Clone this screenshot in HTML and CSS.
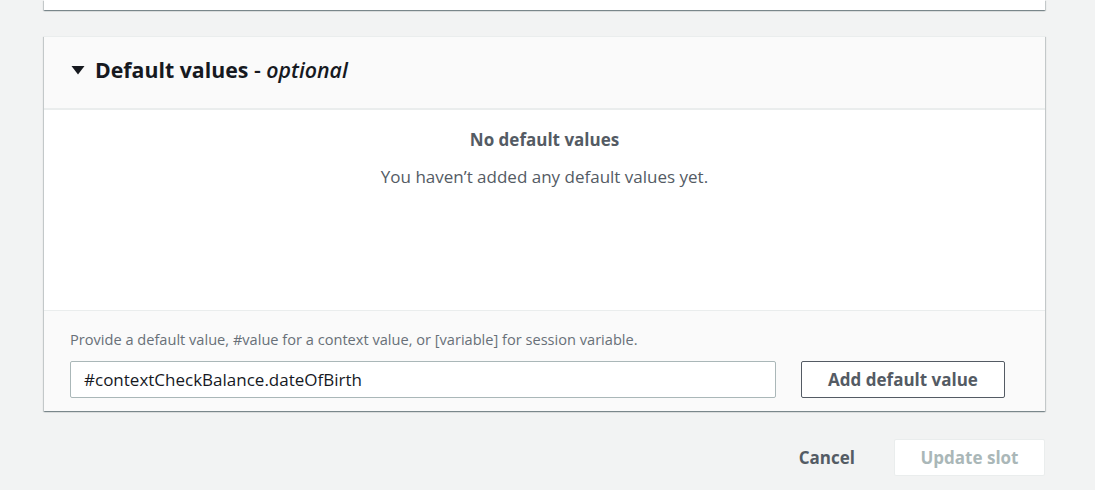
FILE: index.html
```html
<!DOCTYPE html>
<html>
<head>
<meta charset="utf-8">
<link rel="stylesheet" href="styles.css">
</head>
<body>
<div class="page">
  <div class="card top-card"></div>
  <div class="card main-card">
    <div class="card-header">
      <svg class="caret" width="14" height="10" viewBox="0 0 14 10"><polygon points="0.5,1 13.5,1 7,9.5" fill="#16191f"/></svg>
      <h2 class="title">Default values <span class="opt">- <em>optional</em></span></h2>
    </div>
    <div class="card-body">
      <div class="empty-title">No default values</div>
      <div class="empty-text">You haven’t added any default values yet.</div>
    </div>
    <div class="card-footer">
      <div class="hint">Provide a default value, #value for a context value, or [variable] for session variable.</div>
      <div class="input-row">
        <div class="input">#contextCheckBalance.dateOfBirth</div>
        <button class="btn btn-normal">Add default value</button>
      </div>
    </div>
  </div>
  <div class="actions">
    <button class="btn-link">Cancel</button>
    <button class="btn btn-disabled">Update slot</button>
  </div>
</div>
</body>
</html>
```
FILE: styles.css
```css
html, body {
  margin: 0;
  padding: 0;
  background: #f2f3f3;
  font-family: "Open Sans", "Noto Sans", sans-serif;
  color: #16191f;
}
.page {
  width: 1001px;
  margin-left: 44px;
}
.card {
  background: #fff;
  box-shadow: 0 1px 1px 0 rgba(0,28,36,.3), 1px 1px 1px 0 rgba(0,28,36,.15), -1px 1px 1px 0 rgba(0,28,36,.15);
}
.top-card {
  height: 10px;
}
.main-card {
  margin-top: 26px;
  border-top: 1px solid #eaeded;
}
.card-header {
  background: #fafafa;
  border-bottom: 2px solid #eaeded;
  display: flex;
  align-items: center;
  padding-left: 27px;
  padding-bottom: 5px;
  gap: 10px;
  box-sizing: border-box;
  height: 73px;
}
.caret { display: block; }
.title {
  margin: 0;
  font-size: 21.3px;
  font-weight: 700;
  line-height: 26px;
}
.title .opt { font-weight: 600; }
.card-body {
  height: 200px;
  text-align: center;
  color: #545b64;
  padding-top: 18px;
  box-sizing: border-box;
}
.empty-title {
  font-weight: 700;
  font-size: 17px;
  line-height: 24px;
}
.empty-text {
  font-size: 17px;
  line-height: 24px;
  margin-top: 13px;
}
.card-footer {
  background: #fafafa;
  border-top: 1px solid #eaeded;
  padding: 18px 40px 13px 26px;
}
.hint {
  font-size: 14.6px;
  line-height: 20px;
  color: #687078;
}
.input-row {
  display: flex;
  margin-top: 12px;
  gap: 25px;
}
.input {
  flex: 1;
  height: 37px;
  box-sizing: border-box;
  background: #fff;
  border: 1px solid #aab7b8;
  border-radius: 2px;
  padding: 0 13px;
  font-size: 17px;
  line-height: 35px;
  color: #16191f;
}
.btn {
  font-family: inherit;
  font-weight: 700;
  font-size: 17px;
  border-radius: 2px;
  box-sizing: border-box;
  height: 37px;
}
.btn-normal {
  width: 204px;
  background: #fff;
  border: 1px solid #545b64;
  color: #545b64;
}
.actions {
  display: flex;
  justify-content: flex-end;
  align-items: center;
  margin-top: 28px;
  gap: 23px;
}
.btn-link {
  font-family: inherit;
  font-weight: 700;
  font-size: 17px;
  background: none;
  border: none;
  color: #545b64;
  padding: 0 16px;
}
.btn-disabled {
  width: 151px;
  height: 37px;
  background: #fff;
  border: 1px solid #eaeded;
  color: #aab7b8;
}
```
